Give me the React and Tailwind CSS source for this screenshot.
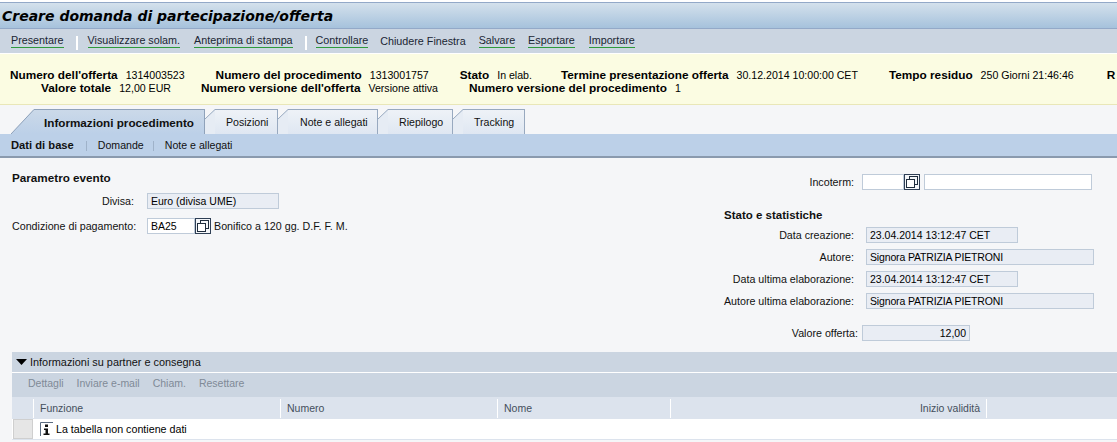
const sans = "font-['Liberation_Sans',Arial,sans-serif]";

const toolbarItems = [
  { label: 'Presentare', ml: 'ml-[11px]', link: true },
  { sep: true, ml: 'ml-[12px]' },
  { label: 'Visualizzare solam.', ml: 'ml-[10px]', link: true },
  { label: 'Anteprima di stampa', ml: 'ml-[14px]', link: true },
  { sep: true, ml: 'ml-[12px]' },
  { label: 'Controllare', ml: 'ml-[9px]', link: true },
  { label: 'Chiudere Finestra', ml: 'ml-[12px]' },
  { label: 'Salvare', ml: 'ml-[13px]', link: true },
  { label: 'Esportare', ml: 'ml-[13px]', link: true },
  { label: 'Importare', ml: 'ml-[14px]', link: true },
];

const tabs = [
  { label: 'Posizioni', width: 'w-[63px]', pad: 'pl-[11px]' },
  { label: 'Note e allegati', width: 'w-[90px]', pad: 'pl-[12px]' },
  { label: 'Riepilogo', width: 'w-[65px]', pad: 'pl-[11px]' },
  { label: 'Tracking', width: 'w-[62px]', pad: 'pl-[11px]' },
];

// Value box used by all the form rows
const Field = ({ children, className = '', readOnly = true }) => (
  <div
    className={`h-[16px] flex items-center px-[3px] border border-[#bfcbd9] text-[10.5px] leading-none whitespace-nowrap text-black ${
      readOnly ? 'bg-[#e9edf4]' : 'bg-white'
    } ${className}`}
  >
    {children}
  </div>
);

const ValueHelp = () => (
  <div className="w-[16px] h-[16px] bg-[#f4f6f9] border border-[#2f3f55] flex items-center justify-center">
    <svg width="12" height="12" viewBox="0 0 12 12" fill="none" stroke="#1f2d3d">
      <rect x="3.5" y="0.5" width="8" height="8" fill="#f4f6f9" />
      <rect x="0.5" y="3.5" width="8" height="8" fill="#ffffff" />
    </svg>
  </div>
);

const InfoIcon = () => (
  <svg width="13" height="14" viewBox="0 0 13 14" className="shrink-0">
    <path d="M0.5 14V0.5H13" fill="none" stroke="#5a6b80" />
    <rect x="5" y="2.5" width="3" height="2.5" fill="#111" />
    <path d="M4 6.5H8V11.5H9.5V13H3.5V11.5H5.5V8H4Z" fill="#111" />
  </svg>
);

const Row = ({ label, labelW, gap, children, className = '' }) => (
  <div className={`flex items-center ${className}`}>
    <div className={`${labelW} text-right text-[10.7px] whitespace-nowrap ${gap}`}>{label}</div>
    {children}
  </div>
);

const Pair = ({ label, value, className = '' }) => (
  <div className={`flex items-baseline whitespace-nowrap ${className}`}>
    <span className="font-bold text-[11.8px] mr-[8px]">{label}</span>
    <span className="text-[10.6px]">{value}</span>
  </div>
);

export default function App() {
  return (
    <div className={`${sans} w-[1117px] h-[442px] overflow-hidden bg-[#f5f6f8] text-[#111]`}>
      {/* Page title */}
      <div className="h-[2px] bg-white" />
      <div className="h-[27px] border-y border-[#93a9c8] bg-gradient-to-b from-[#d4e1ec] to-[#a6c2dc] flex items-center pl-[2px]">
        <h1 className="font-['DejaVu_Sans',Verdana,sans-serif] font-bold italic text-[14px] text-black leading-none">
          Creare domanda di partecipazione/offerta
        </h1>
      </div>

      {/* Action toolbar */}
      <div className="h-[24px] bg-[#cbd5e1] flex items-center text-[10.75px] text-[#1a2533]">
        {toolbarItems.map((item, i) =>
          item.sep ? (
            <div key={i} className={`${item.ml} w-[2px] h-[14px] mt-[3px] bg-white`} />
          ) : (
            <span
              key={i}
              className={`${item.ml} whitespace-nowrap leading-[13px] ${item.link ? 'border-b border-[#2e9a3c]' : ''}`}
            >
              {item.label}
            </span>
          )
        )}
      </div>
      <div className="h-px bg-white" />

      {/* Offer summary */}
      <div className="h-[51px] bg-[#fbfce2] border-b border-[#e9e7b8] pt-[15px] text-black overflow-hidden">
        <div className="flex h-[13px] items-center pl-[10px]">
          <Pair label="Numero dell'offerta" value="1314003523" />
          <Pair label="Numero del procedimento" value="1313001757" className="ml-[31px]" />
          <Pair label="Stato" value="In elab." className="ml-[31px]" />
          <Pair label="Termine presentazione offerta" value="30.12.2014 10:00:00 CET" className="ml-[29px]" />
          <Pair label="Tempo residuo" value="250 Giorni 21:46:46" className="ml-[31px]" />
          <Pair label="R" value="" className="ml-[33px]" />
        </div>
        <div className="flex h-[13px] items-center pl-[41px]">
          <Pair label="Valore totale" value="12,00 EUR" />
          <Pair label="Numero versione dell'offerta" value="Versione attiva" className="ml-[30px]" />
          <Pair label="Numero versione del procedimento" value="1" className="ml-[31px]" />
        </div>
      </div>

      {/* Tab strip */}
      <div className="h-[29px] flex items-end pl-[11px]">
        <div className="flex h-[25px] relative z-10">
          <svg width="23" height="25" viewBox="0 0 23 25" className="block">
            <defs>
              <linearGradient id="activeTab" x1="0" y1="0" x2="0" y2="1">
                <stop offset="0" stopColor="#cbd9e9" />
                <stop offset="1" stopColor="#bcd0e8" />
              </linearGradient>
            </defs>
            <polygon points="0,25 23,0 23,25" fill="url(#activeTab)" />
            <line x1="0" y1="25" x2="23" y2="0.5" stroke="#8fa2ba" />
          </svg>
          <div className="w-[171px] flex items-center pl-[10px] pt-px border-t border-r border-[#8fa2ba] bg-gradient-to-b from-[#cbd9e9] to-[#bcd0e8] font-bold text-[11.7px] whitespace-nowrap">
            Informazioni procedimento
          </div>
        </div>
        {tabs.map((tab) => (
          <div key={tab.label} className="flex h-[25px]">
            <svg width="10" height="25" viewBox="0 0 10 25" className="block">
              <polygon points="0,10 10,0 10,25 0,25" fill="#e6ecf4" />
              <line x1="0" y1="10" x2="10" y2="0.5" stroke="#98a9bf" />
            </svg>
            <div
              className={`${tab.width} ${tab.pad} pt-px flex items-center border-t border-r border-[#98a9bf] bg-gradient-to-b from-[#eef2f7] to-[#dfe7f2] text-[10.6px] whitespace-nowrap`}
            >
              {tab.label}
            </div>
          </div>
        ))}
      </div>

      {/* Sub navigation */}
      <div className="h-[24px] pt-px bg-[#bcd0e8] border-b-2 border-[#8a9aae] flex items-center pl-[11px] text-[10.6px]">
        <span className="font-bold text-[11.2px]">Dati di base</span>
        <span className="w-px h-[10px] bg-[#9fb2c9] ml-[12px] mr-[11px]" />
        <span>Domande</span>
        <span className="w-px h-[10px] bg-[#9fb2c9] ml-[9px] mr-[11px]" />
        <span>Note e allegati</span>
      </div>

      {/* Form area */}
      <div className="h-[194px] flex">
        <div className="w-[720px] pl-[12px] pt-[13px]">
          <div className="font-bold text-[11.7px] leading-[14px]">Parametro evento</div>
          <Row label="Divisa:" labelW="w-[122px]" gap="mr-[13px]" className="mt-[8px]">
            <Field className="w-[132px]">Euro (divisa UME)</Field>
          </Row>
          <Row label="Condizione di pagamento:" labelW="w-[122px]" gap="mr-[13px]" className="mt-[9px]">
            <Field readOnly={false} className="w-[48px]">BA25</Field>
            <ValueHelp />
            <span className="ml-[3px] text-[10.7px] whitespace-nowrap">Bonifico a 120 gg. D.F. F. M.</span>
          </Row>
        </div>

        <div className="flex-1 pt-[16px]">
          <Row label="Incoterm:" labelW="w-[134px]" gap="mr-[8px]">
            <Field readOnly={false} className="w-[42px]" />
            <ValueHelp />
            <Field readOnly={false} className="w-[168px] ml-[4px]" />
          </Row>
          <div className="font-bold text-[11.5px] leading-[14px] ml-[4px] mt-[18px]">Stato e statistiche</div>
          <Row label="Data creazione:" labelW="w-[134px]" gap="mr-[12px]" className="mt-[5px]">
            <Field className="w-[152px]">23.04.2014 13:12:47 CET</Field>
          </Row>
          <Row label="Autore:" labelW="w-[134px]" gap="mr-[12px]" className="mt-[6px]">
            <Field className="w-[228px] tracking-[-0.15px]">Signora PATRIZIA PIETRONI</Field>
          </Row>
          <Row label="Data ultima elaborazione:" labelW="w-[134px]" gap="mr-[12px]" className="mt-[6px]">
            <Field className="w-[152px]">23.04.2014 13:12:47 CET</Field>
          </Row>
          <Row label="Autore ultima elaborazione:" labelW="w-[134px]" gap="mr-[12px]" className="mt-[6px]">
            <Field className="w-[228px] tracking-[-0.15px]">Signora PATRIZIA PIETRONI</Field>
          </Row>
          <Row label="Valore offerta:" labelW="w-[138px]" gap="mr-[4px]" className="mt-[16px]">
            <Field className="w-[108px] justify-end">12,00</Field>
          </Row>
        </div>
      </div>

      {/* Partner and delivery panel */}
      <div className="ml-[12px]">
        <div className="h-[20px] bg-[#cbd5e1] flex items-center pl-[4px] text-[10.9px]">
          <svg width="11" height="6" viewBox="0 0 11 6" className="mr-[3px]">
            <polygon points="0,0 11,0 5.5,6" fill="#000" />
          </svg>
          Informazioni su partner e consegna
        </div>
        <div className="h-px bg-white" />
        <div className="h-[24px] pb-[2px] bg-[#cbd5e1] flex items-center gap-[13px] pl-[16px] text-[10.5px] text-[#7f8a97]">
          <span>Dettagli</span>
          <span>Inviare e-mail</span>
          <span>Chiam.</span>
          <span>Resettare</span>
        </div>
        <div className="h-[22px] bg-[#dce3ed] flex text-[10.5px] text-[#444f5c] pt-[2px] pb-px">
          <div className="w-[22px] border-r border-white" />
          <div className="w-[247px] pl-[6px] border-r border-white flex items-center">Funzione</div>
          <div className="w-[217px] pl-[6px] border-r border-white flex items-center">Numero</div>
          <div className="w-[173px] pl-[6px] border-r border-white flex items-center">Nome</div>
          <div className="w-[316px] pr-[6px] border-r border-white flex items-center justify-end">Inizio validità</div>
        </div>
        <div className="h-[21px] bg-white border-b border-[#dce3ed] flex">
          <div className="w-[20px] h-[20px] ml-px bg-[#e6e6e6] border border-[#cfcfcf] mr-[7px]" />
          <div className="flex items-center gap-[3px] text-[10.7px] text-black">
            <InfoIcon />
            La tabella non contiene dati
          </div>
        </div>
      </div>
    </div>
  );
}
